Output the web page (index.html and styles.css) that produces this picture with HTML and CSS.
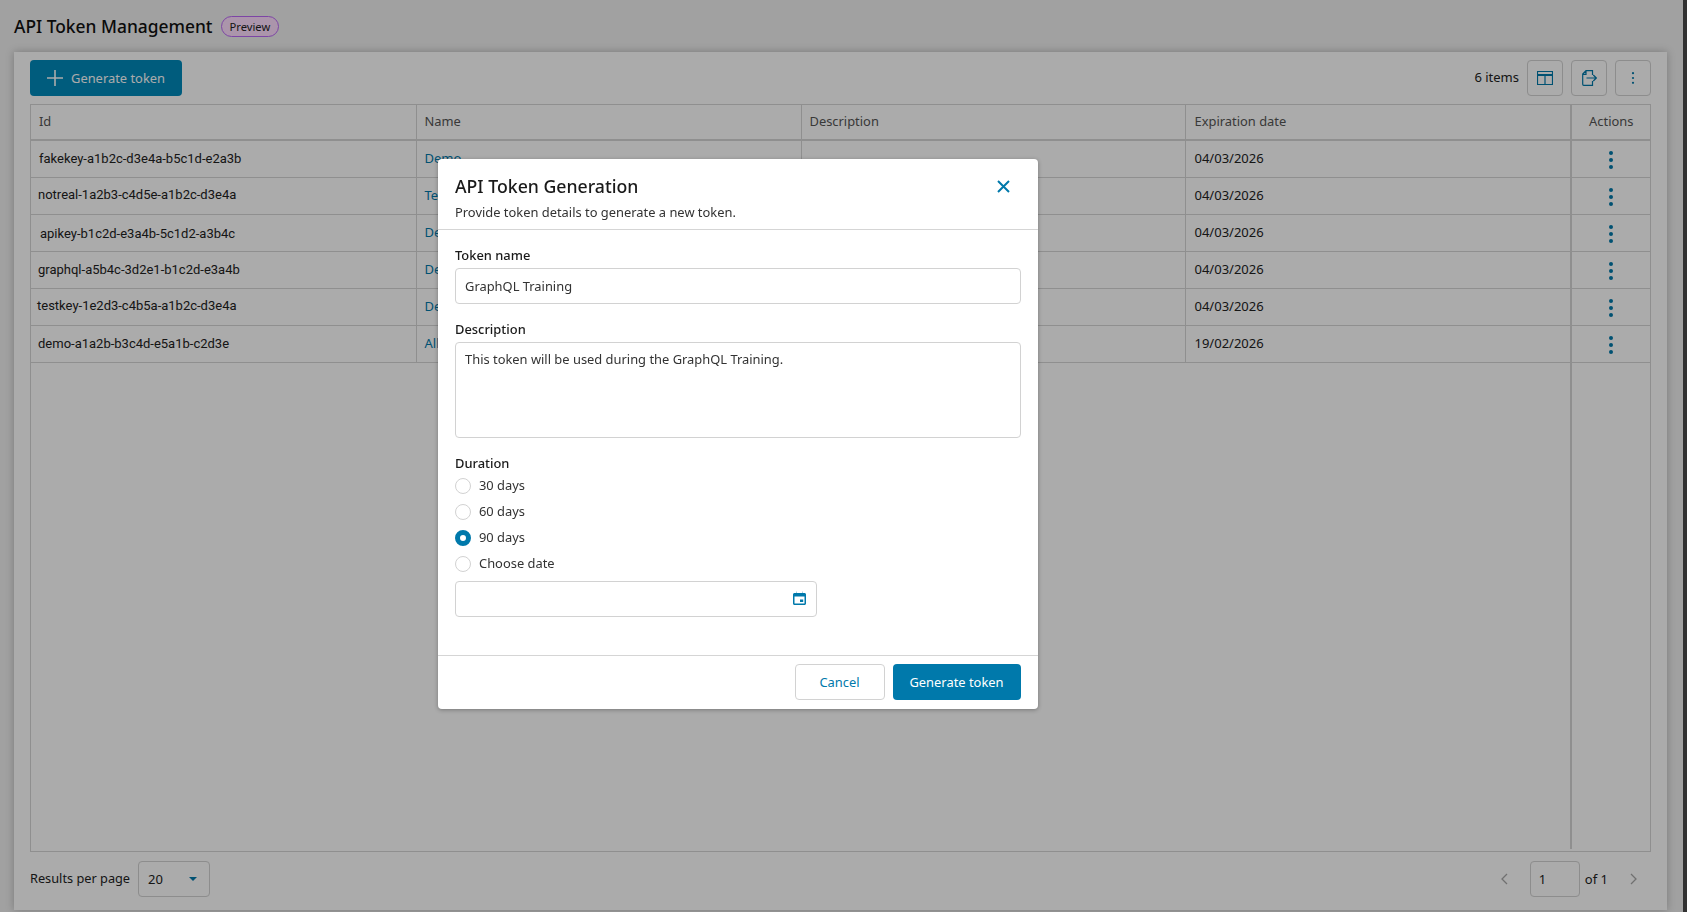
FILE: index.html
```html
<!DOCTYPE html>
<html lang="en">
<head>
<meta charset="utf-8">
<title>API Token Management</title>
<link rel="stylesheet" href="styles.css">
</head>
<body>
<div class="page">
  <main class="main">
    <header class="page-head">
      <h1 class="page-title">API Token Management</h1>
      <span class="badge">Preview</span>
    </header>
    <section class="card">
      <div class="toolbar">
        <button class="btn btn-primary btn-add" type="button">
          <svg class="icon-plus" viewBox="0 0 16 16"><path d="M8 0v16M0 8h16"/></svg>
          Generate token
        </button>
        <div class="toolbar-right">
          <span class="count">6 items</span>
          <button class="icon-btn" type="button" aria-label="Columns">
            <svg width="16" height="14" viewBox="0 0 16 14" class="stroke-icon"><path d="M.5.5h15v13H.5zM.5 3.5h15M.5 4.500h15M8 4.500v9"/></svg>
          </button>
          <button class="icon-btn" type="button" aria-label="Export">
            <svg width="15" height="16" viewBox="0 0 15 16" class="stroke-icon"><path d="M10.500 5V.7H4L.7 4v10.300c0 .6.4 1 1 1h8.800V11M4 .9v3.400H.9M4.500 8h9.800M11.300 5l3 3-3 3"/></svg>
          </button>
          <button class="icon-btn" type="button" aria-label="More">
            <svg width="4" height="12" viewBox="0 0 4 12" class="fill-icon"><circle cx="2" cy="1.200" r="1.100"/><circle cx="2" cy="6" r="1.100"/><circle cx="2" cy="10.800" r="1.100"/></svg>
          </button>
        </div>
      </div>
      <div class="table-wrap">
        <table class="table">
          <colgroup><col class="c-id"><col class="c-name"><col class="c-desc"><col class="c-date"><col class="c-act"></colgroup>
          <thead>
            <tr><th>Id</th><th>Name</th><th>Description</th><th class="date-cell">Expiration date</th><th class="th-act">Actions</th></tr>
          </thead>
          <tbody>
            <tr><td class="id id-a">fakekey-a1b2c-d3e4a-b5c1d-e2a3b</td><td class="link">Demo</td><td></td><td class="date-cell">04/03/2026</td><td class="act"><svg class="kebab" viewBox="0 0 4 18"><circle cx="2" cy="2" r="2"/><circle cx="2" cy="9" r="2"/><circle cx="2" cy="16" r="2"/></svg></td></tr>
            <tr><td class="id id-b id-up">notreal-1a2b3-c4d5e-a1b2c-d3e4a</td><td class="link">Test</td><td></td><td class="date-cell">04/03/2026</td><td class="act"><svg class="kebab" viewBox="0 0 4 18"><circle cx="2" cy="2" r="2"/><circle cx="2" cy="9" r="2"/><circle cx="2" cy="16" r="2"/></svg></td></tr>
            <tr><td class="id id-c id-down">apikey-b1c2d-e3a4b-5c1d2-a3b4c</td><td class="link">Demo</td><td></td><td class="date-cell">04/03/2026</td><td class="act"><svg class="kebab" viewBox="0 0 4 18"><circle cx="2" cy="2" r="2"/><circle cx="2" cy="9" r="2"/><circle cx="2" cy="16" r="2"/></svg></td></tr>
            <tr><td class="id id-b">graphql-a5b4c-3d2e1-b1c2d-e3a4b</td><td class="link">Demo</td><td></td><td class="date-cell">04/03/2026</td><td class="act"><svg class="kebab" viewBox="0 0 4 18"><circle cx="2" cy="2" r="2"/><circle cx="2" cy="9" r="2"/><circle cx="2" cy="16" r="2"/></svg></td></tr>
            <tr><td class="id id-d id-up">testkey-1e2d3-c4b5a-a1b2c-d3e4a</td><td class="link">Demo</td><td></td><td class="date-cell">04/03/2026</td><td class="act"><svg class="kebab" viewBox="0 0 4 18"><circle cx="2" cy="2" r="2"/><circle cx="2" cy="9" r="2"/><circle cx="2" cy="16" r="2"/></svg></td></tr>
            <tr><td class="id id-b">demo-a1a2b-b3c4d-e5a1b-c2d3e</td><td class="link">All</td><td></td><td class="date-cell">19/02/2026</td><td class="act"><svg class="kebab" viewBox="0 0 4 18"><circle cx="2" cy="2" r="2"/><circle cx="2" cy="9" r="2"/><circle cx="2" cy="16" r="2"/></svg></td></tr>
          </tbody>
        </table>
      </div>
      <footer class="pager">
        <div class="pager-left">
          <span class="pager-label">Results per page</span>
          <div class="select"><span>20</span><i class="caret"></i></div>
        </div>
        <div class="pager-right">
          <svg class="chev" viewBox="0 0 7 12"><path d="M6 1 1 6l5 5"/></svg>
          <div class="page-input">1</div>
          <span class="of">of 1</span>
          <svg class="chev chev-next" viewBox="0 0 7 12"><path d="m1 1 5 5-5 5"/></svg>
        </div>
      </footer>
    </section>
  </main>
  <div class="edge"></div>
</div>

<div class="overlay"></div>

<div class="modal" role="dialog" aria-labelledby="modal-title">
  <div class="modal-head">
    <div>
      <h2 class="modal-title" id="modal-title">API Token Generation</h2>
      <p class="modal-sub">Provide token details to generate a new token.</p>
    </div>
    <svg class="close" viewBox="0 0 13 13"><path d="m1 1 11 11M12 1 1 12"/></svg>
  </div>
  <div class="modal-body">
    <label class="field-label field-first">Token name</label>
    <input class="input" type="text" value="GraphQL Training">
    <label class="field-label field-desc">Description</label>
    <textarea class="input textarea">This token will be used during the GraphQL Training.</textarea>
    <div class="field-label field-dur">Duration</div>
    <div class="radios">
      <label class="radio"><input type="radio" name="d"><span>30 days</span></label>
      <label class="radio"><input type="radio" name="d"><span>60 days</span></label>
      <label class="radio"><input type="radio" name="d" checked><span>90 days</span></label>
      <label class="radio"><input type="radio" name="d"><span>Choose date</span></label>
    </div>
    <div class="date">
      <svg class="cal" viewBox="0 0 13 14"><path fill-rule="evenodd" d="M0 3.500c0-.8.700-1.500 1.500-1.500h10c.8 0 1.500.7 1.500 1.500v9c0 .8-.7 1.500-1.500 1.500h-10C.7 14 0 13.300 0 12.500zM1.500 5.500v7h10v-7zM7 8.500h3.200v2.500H7z"/><path d="M3 .5h1v1.500H3zM9 .5h1v1.500H9z" opacity=".35"/></svg>
    </div>
  </div>
  <div class="modal-foot">
    <button class="btn btn-ghost" type="button">Cancel</button>
    <button class="btn btn-solid" type="button">Generate token</button>
  </div>
</div>
</body>
</html>
```
FILE: styles.css
```css
* { box-sizing: border-box; }
html, body { margin: 0; height: 100%; overflow: hidden; }
body { font-family: "Noto Sans", "Open Sans", sans-serif; font-size: 13px; color: #222; background: #f0f0f0; }
button, input, textarea { font: inherit; }

.page { display: flex; height: 912px; }
.main { flex: 1; min-width: 0; padding: 0 16px 2px 14px; display: flex; flex-direction: column; }
.edge { width: 4px; background: #4a4a4a; }

.page-head { height: 52px; display: flex; align-items: center; gap: 8px; }
.page-title { margin: 0; font-size: 17.400px; font-weight: 500; color: #111; }
.badge { height: 21px; padding: 0 8px; border: 1px solid #bb68f6; border-radius: 11px; background: #ffdfff; font-size: 11.200px; line-height: 19px; color: #222; }

.card { flex: 1; min-height: 0; background: #fff; padding: 8px 16px 0; display: flex; flex-direction: column; box-shadow: 0 0 8px rgba(0,0,0,.25); }

.toolbar { display: flex; justify-content: space-between; align-items: center; height: 36px; margin-bottom: 8px; }
.toolbar-right { display: flex; align-items: center; gap: 8px; }
.count { padding-bottom: 2px; }
.btn { height: 36px; border-radius: 4px; font-size: 12.900px; cursor: pointer; }
.btn-primary { background: #0089bb; color: #fff; border: 0; display: flex; align-items: center; gap: 8px; width: 152px; padding: 0 0 1px 17px; }
.icon-plus { width: 16px; height: 16px; fill: none; stroke: #fff; stroke-width: 1.600; }
.icon-btn { width: 36px; height: 36px; background: transparent; border: 1px solid #d2d2d2; border-radius: 4px; display: flex; align-items: center; justify-content: center; padding: 0; }
.stroke-icon { fill: none; stroke: #0079ab; stroke-width: 1.200; }
.fill-icon { fill: #0079ab; }

.table-wrap { flex: 1; min-height: 0; position: relative; border: 1px solid #d5d5d5; }
.table-wrap::after { content: ""; position: absolute; top: 0; bottom: 2px; left: 1539px; width: 2px; background: #d5d5d5; }
.table { width: 100%; border-collapse: collapse; table-layout: fixed; }
.c-id { width: 385px; }
.c-name { width: 385px; }
.c-desc { width: 384px; }
.c-date { width: 385px; }
.table th { height: 35px; padding: 0 8px 2px; text-align: left; font-weight: 400; color: #555; border-bottom: 2px solid #d5d5d5; border-right: 1px solid #d5d5d5; font-size: 12.900px; }
.table th.th-act { text-align: center; border-right: 0; padding-left: 10px; }
.table td { height: 37px; padding: 0 8px 2px; border-bottom: 1px solid #d5d5d5; border-right: 1px solid #d5d5d5; font-size: 13px; white-space: nowrap; overflow: hidden; }
.table .date-cell { padding-left: 9px; }
.table td.act { text-align: center; border-right: 0; padding: 1px 0 0 2px; }
.table td.id { font-family: "Roboto", "Liberation Sans", sans-serif; font-size: 13px; color: #222; padding-bottom: 1px; }
.table td.id-up { padding-bottom: 3px; }
.table td.id-down { padding-bottom: 0; padding-top: 1px; }
.id-a { padding-left: 8px; }
.id-b { padding-left: 7px !important; }
.id-c { padding-left: 9px !important; }
.id-d { padding-left: 6px !important; }
.link { color: #0079ab; }
.kebab { width: 4px; height: 18px; fill: #0079ab; vertical-align: middle; }

.pager { height: 58px; display: flex; justify-content: space-between; align-items: center; padding-bottom: 4px; }
.pager-left, .pager-right { display: flex; align-items: center; }
.pager-left { gap: 8px; }
.pager-label { padding-bottom: 2px; font-size: 12.750px; }
.select { width: 72px; height: 36px; border: 1px solid #d2d2d2; border-radius: 4px; display: flex; align-items: center; justify-content: space-between; padding: 0 12px 0 9px; }
.caret { width: 0; height: 0; border-left: 4px solid transparent; border-right: 4px solid transparent; border-top: 4px solid #0079ab; }
.chev { width: 7px; height: 12px; fill: none; stroke: #a8a8a8; stroke-width: 1.300; margin-right: 22px; }
.chev-next { margin: 0 14px 0 22px; }
.page-input { width: 50px; height: 36px; border: 1px solid #d2d2d2; border-radius: 4px; display: flex; align-items: center; padding-left: 8px; }
.of { margin-left: 5px; }

.overlay { position: fixed; inset: 0; background: rgba(0,0,0,.33); }

.modal { position: absolute; left: 438px; top: 159px; width: 599.500px; height: 550px; background: #fff; border-radius: 4px; box-shadow: 0 1px 4px rgba(0,0,0,.3); display: flex; flex-direction: column; }
.modal-head { height: 71px; padding: 15px 17px 0; border-bottom: 1px solid #d5d5d5; display: flex; justify-content: space-between; align-items: flex-start; }
.modal-title { margin: 0; font-size: 17.700px; line-height: 24px; font-weight: 500; color: #1a1a1a; }
.modal-sub { margin: 5px 0 0; font-size: 12.900px; line-height: 18px; color: #333; }
.close { width: 13px; height: 13px; margin: 6px 11px 0 0; fill: none; stroke: #0079ab; stroke-width: 2; }
.modal-body { flex: 1; padding: 16px 17px 0; display: flex; flex-direction: column; align-items: stretch; }
.field-label { font-size: 12.900px; line-height: 18px; font-weight: 500; color: #1a1a1a; }
.field-first { margin-bottom: 4px; }
.field-desc { margin-top: 16px; margin-bottom: 4px; }
.field-dur { margin-top: 16px; }
.input { width: 100%; height: 36px; border: 1px solid #d2d2d2; border-radius: 4px; padding: 0 9px; font-size: 12.900px; color: #333; outline: 0; }
.textarea { height: 96px; padding: 7px 9px; resize: none; display: block; }
.radios { display: flex; flex-direction: column; }
.radio { height: 26px; display: flex; align-items: center; gap: 8px; font-size: 12.900px; color: #333; }
.radio input { appearance: none; width: 16px; height: 16px; margin: 1px 0 0; border: 1px solid #d2d2d2; border-radius: 50%; background: #fff; }
.radio input:checked { border: 5px solid #0079ab; }
.date { width: 362px; height: 36px; margin-top: 5px; border: 1px solid #d2d2d2; border-radius: 4px; display: flex; align-items: center; justify-content: flex-end; padding-right: 10px; }
.cal { width: 13px; height: 14px; margin-bottom: 2px; fill: #0079ab; }
.modal-foot { height: 54px; border-top: 1px solid #d5d5d5; padding: 8px 17px 0; display: flex; justify-content: flex-end; gap: 8px; }
.btn-ghost { width: 90px; background: #fff; border: 1px solid #d2d2d2; color: #0079ab; }
.btn-solid { width: 128px; background: #0079ab; border: 0; color: #fff; }
```
